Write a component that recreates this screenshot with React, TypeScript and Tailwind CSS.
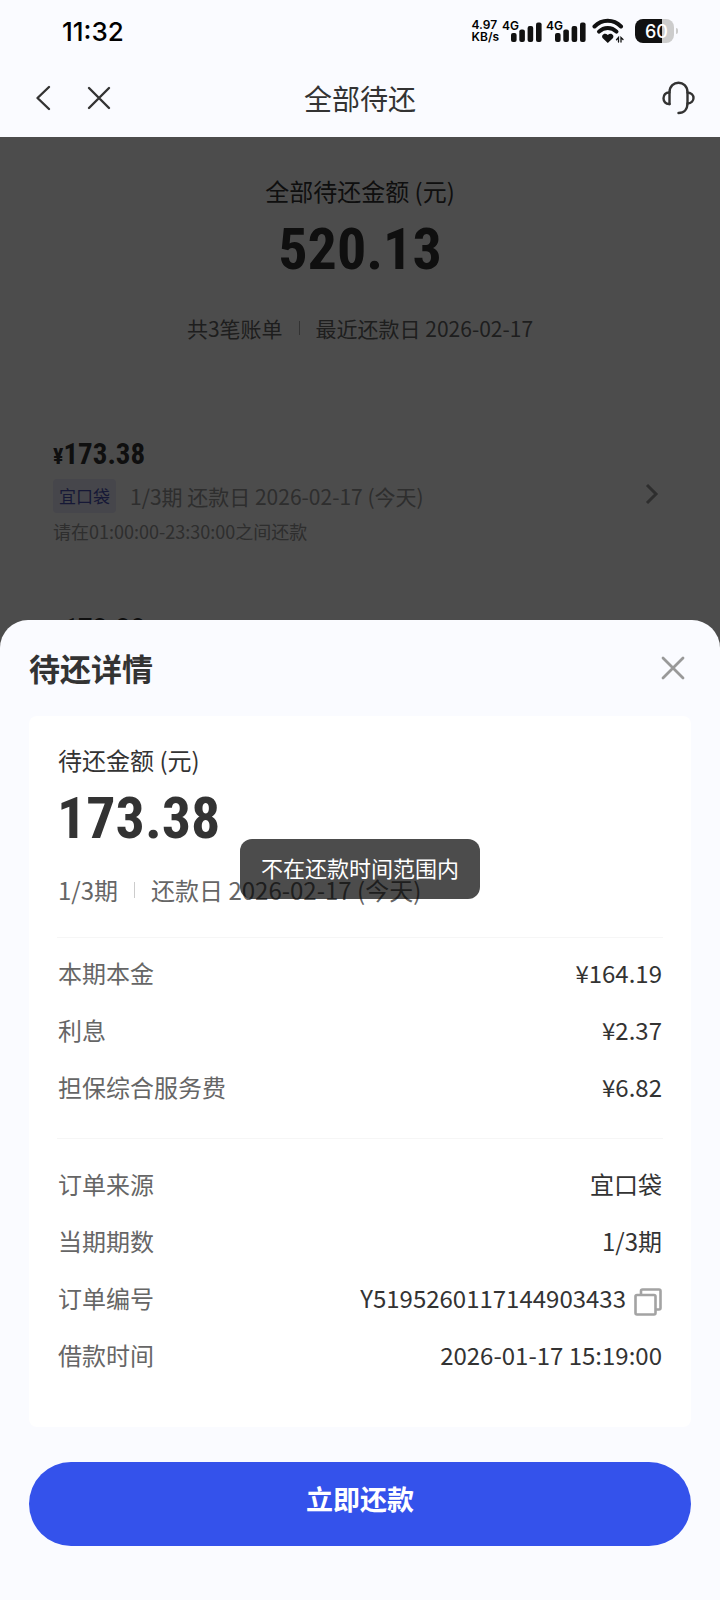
import React from "react";

const bills = [
  { id: 1, amount: "173.38", tag: "宜口袋", info: "1/3期 还款日 2026-02-17 (今天)", note: "请在01:00:00-23:30:00之间还款" },
  { id: 2, amount: "173.38" },
];

const fees = [
  { label: "本期本金", value: "¥164.19" },
  { label: "利息", value: "¥2.37" },
  { label: "担保综合服务费", value: "¥6.82" },
];

const order = [
  { label: "订单来源", value: "宜口袋" },
  { label: "当期期数", value: "1/3期" },
  { label: "订单编号", value: "Y5195260117144903433", copy: true },
  { label: "借款时间", value: "2026-01-17 15:19:00" },
];

function Signal() {
  return (
    <div className="flex h-6 items-end">
      <span className="self-start text-[12px] leading-[14px] font-semibold">4G</span>
      <svg width="31" height="21" viewBox="0 0 31 21" className="-ml-2" fill="#111">
        <rect x="0" y="11" width="5.600" height="9" rx="2" />
        <rect x="8.300" y="7.500" width="5.600" height="12.500" rx="2" />
        <rect x="16.600" y="4" width="5.600" height="16" rx="2" />
        <rect x="25" y="0.500" width="5.600" height="19.500" rx="2" />
      </svg>
    </div>
  );
}

function Wifi() {
  return (
    <svg width="32" height="26" viewBox="0 0 32 26" fill="none" stroke="#111" strokeLinecap="round">
      <path d="M2.500 8.500C10 .8 21.500 .8 29 8.500" strokeWidth="4" />
      <path d="M7 13.700C12 8.700 19.500 8.700 24.500 13.700" strokeWidth="4" />
      <path
        d="M15.800 25L10.800 20.200C8.500 17.500 12.500 13.800 15.800 17C19 13.800 23 17.500 20.800 20.200Z"
        fill="#111"
        stroke="none"
      />
      <path d="M26.500 24V19.500L24.500 21.800M29 24V19.500L31 21.500" strokeWidth="1.300" />
    </svg>
  );
}

function StatusBar() {
  return (
    <div className="flex h-[62px] items-center justify-between pr-[42px] pl-[62px] font-['Inter',sans-serif] text-black">
      <span className="text-[26px] font-medium">11:32</span>
      <div className="flex items-center">
        <div className="mr-[3px] text-[12px] leading-3 font-semibold">
          <div>4.97</div>
          <div>KB/s</div>
        </div>
        <div className="flex gap-1">
          <Signal />
          <Signal />
        </div>
        <div className="ml-1.5">
          <Wifi />
        </div>
        <div className="ml-[11px] flex items-center gap-0.5">
          <div className="flex h-6 w-[39px] items-center justify-center rounded-lg bg-linear-to-r from-[#111] from-70% to-[#ccc] to-70% pl-1 text-[18px] font-medium text-white">
            60
          </div>
          <div className="h-1.5 w-0.5 rounded-r bg-[#ccc]" />
        </div>
      </div>
    </div>
  );
}

function NavBar() {
  return (
    <div className="grid h-[75px] grid-cols-[1fr_auto_1fr] items-center px-[25px] pb-1">
      <div className="flex items-center gap-9 pl-2.5">
        <button type="button" aria-label="返回">
          <svg width="16" height="26" viewBox="0 0 16 26" fill="none" stroke="#333" strokeWidth="2.400" strokeLinecap="round" strokeLinejoin="round">
            <path d="M14 2L2.500 13L14 24" />
          </svg>
        </button>
        <button type="button" aria-label="关闭">
          <svg width="24" height="24" viewBox="0 0 24 24" fill="none" stroke="#333" strokeWidth="2.400" strokeLinecap="round">
            <path d="M2 2L22 22M22 2L2 22" />
          </svg>
        </button>
      </div>
      <h1 className="text-[28px] leading-8 text-[#333]">全部待还</h1>
      <button type="button" aria-label="客服" className="justify-self-end">
        <svg width="34" height="34" viewBox="0 0 34 34" fill="none" stroke="#333" strokeWidth="2.400" strokeLinecap="round" strokeLinejoin="round">
          <path d="M8.500 23V11.500C8.500 -1.500 26.500 -1.500 26.500 11.500V22C26.500 28.500 23 32 17.500 32" />
          <path d="M8.500 11.500C.5 11 .5 23.500 8.500 23" />
          <path d="M26.500 11.500C34.500 12 34.500 22 26.500 22.500" />
        </svg>
      </button>
    </div>
  );
}

function BillList() {
  return (
    <div className="pt-[38px]">
      <div className="text-center">
        <p className="text-2xl text-[#333]">全部待还金额 (元)</p>
        <p className="mt-2.5 font-['Roboto_Condensed','Roboto',sans-serif] text-[58px] leading-[64px] font-bold text-[#333]">
          520.13
        </p>
        <p className="mt-[31px] flex items-center justify-center text-[21px] leading-8 text-[#666]">
          共3笔账单
          <span className="mx-4 h-3.5 w-px bg-[#aaa]" />
          最近还款日 2026-02-17
        </p>
      </div>
      <ul className="mt-[90px] flex flex-col px-[53px]">
        {bills.map((bill) => (
          <li key={bill.id} className="pb-16">
            <a href="#bill" className="flex items-center justify-between pr-2">
              <div>
                <div className="font-['Roboto_Condensed','Roboto',sans-serif] text-[29px] leading-10 font-bold text-[#333]">
                  <span className="text-[22px]">¥</span>
                  {bill.amount}
                </div>
                {bill.info && (
                  <div className="mt-0.5 flex h-[34px] items-center gap-3.5">
                    <span className="rounded bg-[#eaebfa] px-1.5 text-[17px] leading-[34px] text-[#4a52b4]">{bill.tag}</span>
                    <span className="text-[21px] leading-8 text-[#999]">{bill.info}</span>
                  </div>
                )}
                {bill.note && <div className="mt-1.5 pb-0.5 text-[18px] leading-6 text-[#999]">{bill.note}</div>}
              </div>
              {bill.info && (
                <svg width="14" height="22" viewBox="0 0 14 22" fill="none" stroke="#999" strokeWidth="3" className="mt-2">
                  <path d="M2 2L11 11L2 20" />
                </svg>
              )}
            </a>
          </li>
        ))}
      </ul>
    </div>
  );
}

function Row({ label, value, copy }: { label: string; value: string; copy?: boolean }) {
  return (
    <div className="flex h-[57px] items-center justify-between px-px">
      <dt className="text-[#666]">{label}</dt>
      <dd className="flex items-center gap-2 text-[#333]">
        {value}
        {copy && (
          <button type="button" aria-label="复制订单编号" className="pt-2">
            <svg width="28" height="28" viewBox="0 0 28 28" fill="none" stroke="#a3a3a3" strokeWidth="2.600" strokeLinejoin="round">
              <rect x="1.500" y="7" width="20" height="19.500" rx="1.500" />
              <path d="M7 7V3Q7 1.500 8.500 1.500H25Q26.500 1.500 26.500 3V20Q26.500 21.500 25 21.500H21.500" />
            </svg>
          </button>
        )}
      </dd>
    </div>
  );
}

function DetailSheet() {
  return (
    <section className="relative mt-auto rounded-t-[28px] bg-[#fafbff] px-[29px] pb-[54px]">
      <div className="flex h-24 items-center justify-between">
        <h2 className="text-[31px] leading-10 font-bold text-[#333]">待还详情</h2>
        <button type="button" aria-label="关闭详情" className="pr-1.5">
          <svg width="24" height="24" viewBox="0 0 24 24" fill="none" stroke="#999" strokeWidth="2.800" strokeLinecap="round">
            <path d="M2 2L22 22M22 2L2 22" />
          </svg>
        </button>
      </div>

      <div className="rounded-lg bg-white px-7 pt-7 pb-11 text-2xl">
        <p className="px-px text-[#333]">待还金额 (元)</p>
        <p className="mt-2.5 font-['Roboto_Condensed','Roboto',sans-serif] text-[58px] leading-[64px] font-bold text-[#333]">
          173.38
        </p>
        <p className="mt-6 flex items-center px-px text-[#666]">
          1/3期
          <span className="mx-4 h-4 w-px bg-[#ccc]" />
          还款日 2026-02-17 (今天)
        </p>
        <dl className="mt-[31px] border-t border-[#f6f6f6] pt-1.5 pb-[23px]">
          {fees.map((item) => (
            <Row key={item.label} {...item} />
          ))}
        </dl>
        <dl className="border-t border-[#f6f6f6] pt-4">
          {order.map((item) => (
            <Row key={item.label} {...item} />
          ))}
        </dl>
      </div>

      <button
        type="button"
        className="mt-[35px] flex h-[84px] w-full items-center justify-center rounded-full bg-[#3452eb] pb-2.5 text-[27px] font-bold text-white"
      >
        立即还款
      </button>
    </section>
  );
}

export default function App() {
  return (
    <div className="flex min-h-screen flex-col bg-[#fafbff] font-['Noto_Sans_CJK_SC',sans-serif]">
      <header>
        <StatusBar />
        <NavBar />
      </header>
      <main className="relative flex flex-1 flex-col pt-40">
        {/* Bill list under the mask */}
        <div className="absolute inset-0 overflow-hidden bg-white">
          <BillList />
          <div className="absolute inset-0 bg-black/70" />
        </div>

        <DetailSheet />

        {/* Toast */}
        <div className="pointer-events-none absolute inset-0 flex items-center justify-center">
          <div role="status" className="rounded-xl bg-black/70 px-[21px] pt-3 pb-4 text-[22px] leading-8 text-white">
            不在还款时间范围内
          </div>
        </div>
      </main>
    </div>
  );
}
